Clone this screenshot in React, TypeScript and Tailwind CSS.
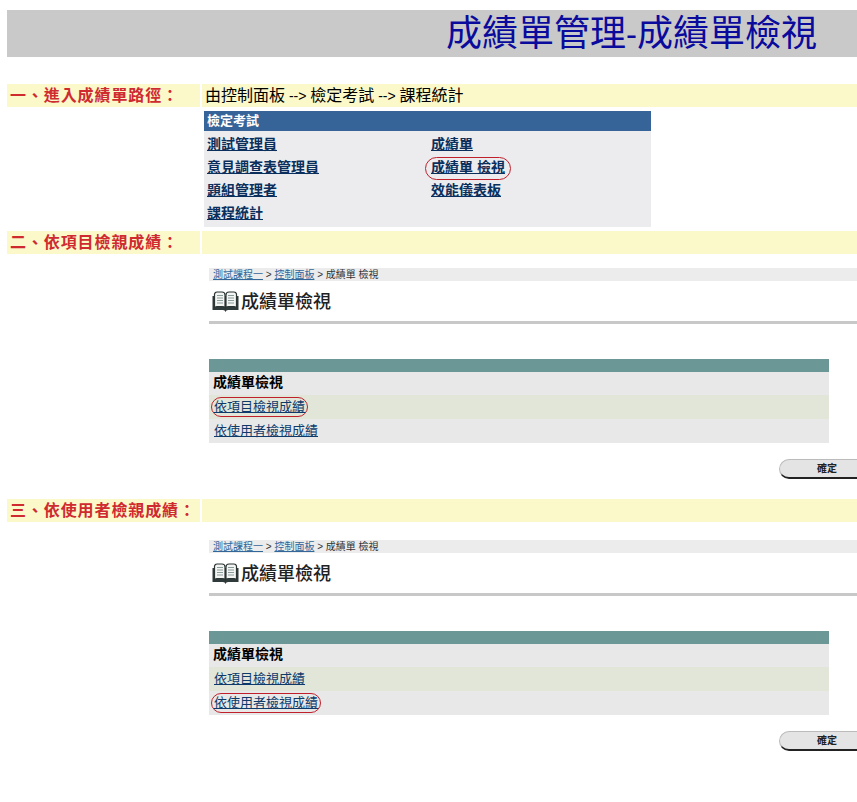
const cjk = "font-['Liberation_Sans','Noto_Sans_CJK_TC',sans-serif]";

function SectionRow({ label, children }: { label: string; children?: React.ReactNode }) {
  return (
    <div className="flex h-[23px] gap-[2px]">
      <div className="w-[193px] pl-[3px] bg-[#fbf8c9] text-[16px] leading-[23px] font-bold text-[#cf2a30] whitespace-nowrap tracking-[0.9px]">{label}</div>
      <div className="flex-1 pl-[3px] bg-[#fbf8c9] text-[16px] leading-[23px] text-black whitespace-nowrap">{children}</div>
    </div>
  );
}

function Book() {
  return (
    <svg width="27" height="22" viewBox="0 0 27 22" className="shrink-0">
      <path d="M0.5 5 L0.5 19 L11 19 Q13 19 13.5 21 Q14 19 16 19 L26.5 19 L26.5 5 Z" fill="#2f3a3a" />
      <path d="M2.5 3 Q3 1 5 1 L10 1 Q13 1 13 4 L13 16.5 Q12 15.5 10 15.5 L5 15.5 Q3 15.5 2.5 17 Z" fill="#f2f5f2" stroke="#2b3333" strokeWidth="1.2" />
      <path d="M24.5 3 Q24 1 22 1 L17 1 Q14 1 14 4 L14 16.5 Q15 15.5 17 15.5 L22 15.5 Q24 15.5 24.5 17 Z" fill="#f2f5f2" stroke="#2b3333" strokeWidth="1.2" />
      <path d="M5 4.5 H11 M5 7 H11 M5 9.5 H11 M5 12 H11 M16 4.5 H22 M16 7 H22 M16 9.5 H22 M16 12 H22" stroke="#8a9a9a" strokeWidth="1" />
    </svg>
  );
}

function GradeView({ circled }: { circled: 0 | 1 }) {
  const items = ["依項目檢視成績", "依使用者檢視成績"];
  return (
    <div className="ml-[202px]">
      <div className="h-[13px] bg-[#ececec] pl-[4px] text-[10px] leading-[13px] text-[#333] whitespace-nowrap">
        <a className="text-[#336699] underline">測試課程一</a> &gt; <a className="text-[#336699] underline">控制面板</a> &gt; 成績單 檢視
      </div>
      <div className="h-[40px] flex items-center pl-[3px] gap-[2px] pt-[1px]">
        <Book />
        <span className="text-[18px] font-medium text-[#222] leading-none">成績單檢視</span>
      </div>
      <div className="h-[3px] bg-[#c8c8c8]" />
      <div className="mt-[35px] w-[620px]">
        <div className="h-[13px] bg-[#6b9797]" />
        <div className="h-[23px] bg-[#e8e8e8] pl-[4px] text-[14px] leading-[21px] font-bold text-black">成績單檢視</div>
        {items.map((t, i) => (
          <div key={t} className={`h-[24px] pl-[5px] text-[13px] leading-[24px] ${i === 0 ? "bg-[#e1e6d9]" : "bg-[#e8e8e8]"}`}>
            <span className="relative inline-block">
              <a className="text-[#0d3a6b] underline">{t}</a>
              {circled === i && (
                <span className="absolute left-[-3px] right-[-3px] top-[2px] h-[20px] rounded-full border border-[#c0202c]" />
              )}
            </span>
          </div>
        ))}
      </div>
      <div className="mt-[16px] flex justify-end">
        <div className="w-[78px] h-[20px] rounded-l-[10px] bg-[#e4e4e4] border border-[#bbb] border-b-2 border-b-[#222] border-r-0 text-[10px] font-bold leading-[17px] text-[#222] pl-[37px]">確定</div>
      </div>
    </div>
  );
}

export default function App() {
  const left = ["測試管理員", "意見調查表管理員", "題組管理者", "課程統計"];
  const right = ["成績單", "成績單 檢視", "效能儀表板"];
  const arrow = <span className="text-[14px]"> --&gt; </span>;
  return (
    <div className={`w-[857px] h-[802px] bg-white pl-[7px] pt-[10px] overflow-hidden ${cjk}`}>
      <div className="h-[47px] bg-[#c9c9c9] text-right pr-[40px] text-[36px] leading-[47px] text-[#0a0a9c] whitespace-nowrap">成績單管理<span className="text-[33px]">-</span>成績單檢視</div>

      <div className="mt-[27px]">
        <SectionRow label="一、進入成績單路徑：">由控制面板{arrow}檢定考試{arrow}課程統計</SectionRow>
      </div>

      <div className="ml-[197px] mt-[4px] w-[447px] h-[116px] bg-[#ececee]">
        <div className="h-[20px] bg-[#366499] pl-[3px] text-[13px] font-bold leading-[20px] text-white">檢定考試</div>
        <div className="flex pl-[3px] pt-[2px]">
          <div className="w-[224px]">
            {left.map((t) => (
              <div key={t} className="h-[23px] text-[14px] font-bold leading-[23px]"><a className="text-[#0b2f5c] underline">{t}</a></div>
            ))}
          </div>
          <div>
            {right.map((t) => (
              <div key={t} className="h-[23px] text-[14px] font-bold leading-[23px]">
                <span className="relative inline-block">
                  <a className="text-[#0b2f5c] underline">{t}</a>
                  {t === "成績單 檢視" && (
                    <span className="absolute left-[-6px] right-[-6px] top-[1px] h-[23px] rounded-full border border-[#c0202c]" />
                  )}
                </span>
              </div>
            ))}
          </div>
        </div>
      </div>

      <div className="mt-[4px]"><SectionRow label="二、依項目檢親成績：" /></div>
      <div className="mt-[14px]"><GradeView circled={0} /></div>

      <div className="mt-[20px]"><SectionRow label="三、依使用者檢親成績：" /></div>
      <div className="mt-[18px]"><GradeView circled={1} /></div>
    </div>
  );
}
